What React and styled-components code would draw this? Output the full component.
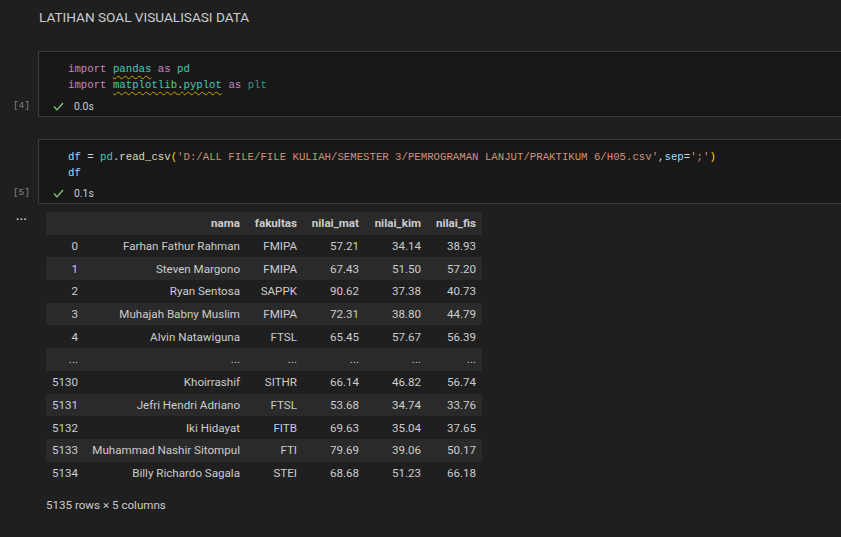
import styled, { createGlobalStyle } from 'styled-components'

const GlobalStyle = createGlobalStyle`
  html, body {
    margin: 0;
    padding: 0;
    background: #1f1f1f;
    overflow: hidden;
  }
`

const Page = styled.div`
  background: #1f1f1f;
  min-height: 537px;
  padding-top: 8px;
  font-family: Roboto, 'Liberation Sans', sans-serif;
  color: #cccccc;
`
const Title = styled.h1`
  margin: 0 0 0 39px;
  font-size: 13.6px;
  font-weight: 400;
  line-height: 18px;
  color: #cccccc;
`
const CellRow = styled.div`
  display: flex;
  align-items: flex-end;
  margin-top: ${(p) => p.$gap}px;
`
const ExecCount = styled.div`
  width: 38px;
  flex: none;
  box-sizing: border-box;
  padding: 0 8px 3px 0;
  text-align: right;
  font-family: 'Liberation Mono', monospace;
  font-size: 9.5px;
  line-height: 16px;
  color: #858585;
`
const CellBox = styled.div`
  flex: 1;
  margin-right: -10px;
  background: #181818;
  border: 1px solid #3b3b3b;
  border-right: none;
  padding: 9px 0 2px;
`
const Code = styled.pre`
  margin: 0;
  padding-left: 29px;
  font-family: 'Liberation Mono', monospace;
  font-size: 10.7px;
  line-height: 16px;
  color: #d4d4d4;
`
const Tok = styled.span`
  color: ${(p) => p.$c};
  ${(p) =>
    p.$warn &&
    `text-decoration: underline wavy #cca700;
     text-decoration-thickness: 1px;
     text-underline-offset: 3px;`}
`
const Status = styled.div`
  display: flex;
  align-items: center;
  height: 16px;
  margin-top: ${(p) => p.$gap}px;
  padding-left: 14px;
  gap: 10px;
`
const Time = styled.span`
  font-size: 10.4px;
  color: #cccccc;
`
const OutputRow = styled.div`
  display: flex;
  margin-top: 8px;
`
const OutGutter = styled.div`
  width: 46px;
  flex: none;
  box-sizing: border-box;
  padding-left: 16px;
  font-size: 11px;
  font-weight: 700;
  line-height: 10px;
  letter-spacing: 0.5px;
  color: #cccccc;
`
const Table = styled.table`
  border-collapse: collapse;
  border-spacing: 0;
  table-layout: fixed;
  width: 436px;
  font-size: 11.6px;
  color: #cccccc;
  tbody tr:nth-child(even) {
    background: #2a2a2a;
  }
`
const HeadRow = styled.tr`
  background: #2a2a2a;
`
const Th = styled.th`
  height: 22.7px;
  padding: 0 6px 0 0;
  text-align: right;
  font-weight: 700;
  white-space: nowrap;
`
const Td = styled.td`
  height: 22.7px;
  padding: 0 6px 0 0;
  text-align: right;
  white-space: nowrap;
`
const Summary = styled.div`
  margin-top: 13px;
  font-size: 11.6px;
  line-height: 16px;
  color: #cccccc;
`

const Check = () => (
  <svg width="11" height="9" viewBox="0 0 11 9">
    <path d="M1 4.5 L4 7.8 L10 1" fill="none" stroke="#89d185" strokeWidth="1.2" />
  </svg>
)

const columns = ['', 'nama', 'fakultas', 'nilai_mat', 'nilai_kim', 'nilai_fis']
const widths = [38, 162, 57, 62, 62, 55]

const rows = [
  ['0', 'Farhan Fathur Rahman', 'FMIPA', '57.21', '34.14', '38.93'],
  ['1', 'Steven Margono', 'FMIPA', '67.43', '51.50', '57.20'],
  ['2', 'Ryan Sentosa', 'SAPPK', '90.62', '37.38', '40.73'],
  ['3', 'Muhajah Babny Muslim', 'FMIPA', '72.31', '38.80', '44.79'],
  ['4', 'Alvin Natawiguna', 'FTSL', '65.45', '57.67', '56.39'],
  ['...', '...', '...', '...', '...', '...'],
  ['5130', 'Khoirrashif', 'SITHR', '66.14', '46.82', '56.74'],
  ['5131', 'Jefri Hendri Adriano', 'FTSL', '53.68', '34.74', '33.76'],
  ['5132', 'Iki Hidayat', 'FITB', '69.63', '35.04', '37.65'],
  ['5133', 'Muhammad Nashir Sitompul', 'FTI', '79.69', '39.06', '50.17'],
  ['5134', 'Billy Richardo Sagala', 'STEI', '68.68', '51.23', '66.18'],
]

const C = {
  kw: '#c586c0',
  mod: '#4ec9b0',
  faded: '#3a9683',
  var: '#9cdcfe',
  fn: '#dcdcaa',
  str: '#ce9178',
  br: '#ffd700',
  txt: '#d4d4d4',
}

export default function App() {
  return (
    <>
      <GlobalStyle />
      <Page>
        <Title>LATIHAN SOAL VISUALISASI DATA</Title>

        <CellRow $gap={25}>
          <ExecCount>[4]</ExecCount>
          <CellBox>
            <Code>
              <Tok $c={C.kw}>import</Tok> <Tok $c={C.mod} $warn>pandas</Tok>{' '}
              <Tok $c={C.kw}>as</Tok> <Tok $c={C.mod}>pd</Tok>
              {'\n'}
              <Tok $c={C.kw}>import</Tok>{' '}
              <Tok $c={C.mod} $warn>
                matplotlib<Tok $c={C.txt}>.</Tok>pyplot
              </Tok>{' '}
              <Tok $c={C.kw}>as</Tok> <Tok $c={C.faded}>plt</Tok>
            </Code>
            <Status $gap={5}>
              <Check />
              <Time>0.0s</Time>
            </Status>
          </CellBox>
        </CellRow>

        <CellRow $gap={22}>
          <ExecCount>[5]</ExecCount>
          <CellBox>
            <Code>
              <Tok $c={C.var}>df</Tok> = <Tok $c={C.mod}>pd</Tok>.
              <Tok $c={C.fn}>read_csv</Tok>
              <Tok $c={C.br}>(</Tok>
              <Tok $c={C.str}>
                'D:/ALL FILE/FILE KULIAH/SEMESTER 3/PEMROGRAMAN LANJUT/PRAKTIKUM 6/H05.csv'
              </Tok>
              ,<Tok $c={C.var}>sep</Tok>=<Tok $c={C.str}>';'</Tok>
              <Tok $c={C.br}>)</Tok>
              {'\n'}
              <Tok $c={C.var}>df</Tok>
            </Code>
            <Status $gap={4}>
              <Check />
              <Time>0.1s</Time>
            </Status>
          </CellBox>
        </CellRow>

        <OutputRow>
          <OutGutter>...</OutGutter>
          <div>
            <Table>
              <colgroup>
                {widths.map((w, i) => (
                  <col key={i} style={{ width: w }} />
                ))}
              </colgroup>
              <thead>
                <HeadRow>
                  {columns.map((c, i) => (
                    <Th key={i}>{c}</Th>
                  ))}
                </HeadRow>
              </thead>
              <tbody>
                {rows.map((r) => (
                  <tr key={r[0] + r[1]}>
                    {r.map((v, i) => (
                      <Td key={i}>{v}</Td>
                    ))}
                  </tr>
                ))}
              </tbody>
            </Table>
            <Summary>5135 rows × 5 columns</Summary>
          </div>
        </OutputRow>
      </Page>
    </>
  )
}
